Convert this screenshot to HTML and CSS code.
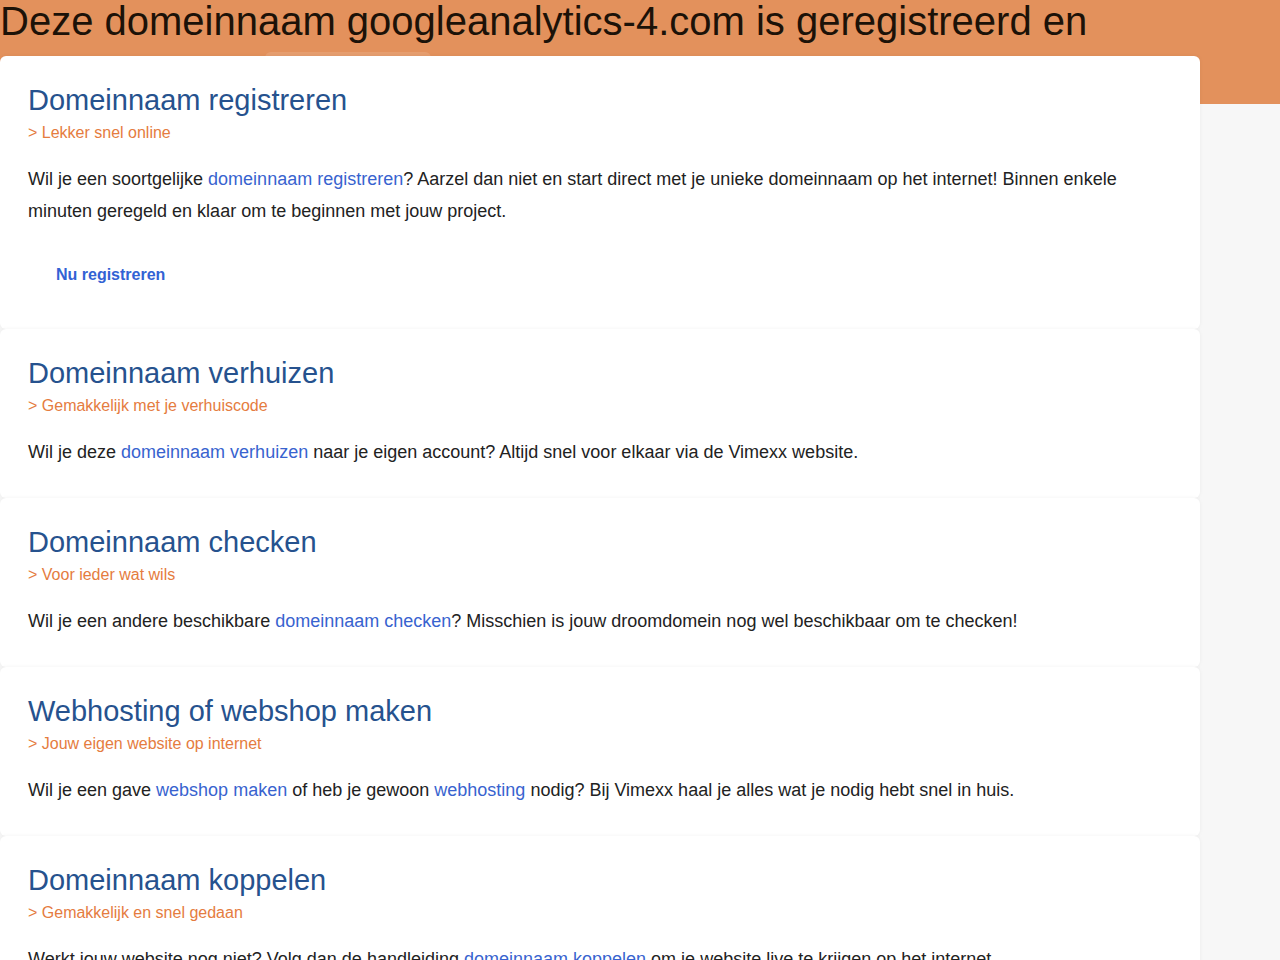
FILE: index.html
```html
<!DOCTYPE html>
<html lang="nl">
<head>
<meta charset="utf-8">
<title>googleanalytics-4.com</title>
<link rel="stylesheet" href="styles.css">
</head>
<body>
<header class="top">
  <h1 class="top-title">Deze domeinnaam googleanalytics-4.com is geregistreerd en is nog niet in gebruik</h1>
  <span class="top-ghost"></span>
</header>
<main class="cards">
  <section class="card">
    <h2 class="card-title">Domeinnaam registreren</h2>
    <p class="card-sub">&gt; Lekker snel online</p>
    <p class="card-text">Wil je een soortgelijke <a href="#">domeinnaam registreren</a>? Aarzel dan niet en start direct met je unieke domeinnaam op het internet! Binnen enkele minuten geregeld en klaar om te beginnen met jouw project.</p>
    <a class="card-btn" href="#">Nu registreren</a>
  </section>
  <section class="card">
    <h2 class="card-title">Domeinnaam verhuizen</h2>
    <p class="card-sub">&gt; Gemakkelijk met je verhuiscode</p>
    <p class="card-text">Wil je deze <a href="#">domeinnaam verhuizen</a> naar je eigen account? Altijd snel voor elkaar via de Vimexx website.</p>
  </section>
  <section class="card">
    <h2 class="card-title">Domeinnaam checken</h2>
    <p class="card-sub">&gt; Voor ieder wat wils</p>
    <p class="card-text">Wil je een andere beschikbare <a href="#">domeinnaam checken</a>? Misschien is jouw droomdomein nog wel beschikbaar om te checken!</p>
  </section>
  <section class="card">
    <h2 class="card-title">Webhosting of webshop maken</h2>
    <p class="card-sub">&gt; Jouw eigen website op internet</p>
    <p class="card-text">Wil je een gave <a href="#">webshop maken</a> of heb je gewoon <a href="#">webhosting</a> nodig? Bij Vimexx haal je alles wat je nodig hebt snel in huis.</p>
  </section>
  <section class="card">
    <h2 class="card-title">Domeinnaam koppelen</h2>
    <p class="card-sub">&gt; Gemakkelijk en snel gedaan</p>
    <p class="card-text">Werkt jouw website nog niet? Volg dan de handleiding <a href="#">domeinnaam koppelen</a> om je website live te krijgen op het internet.</p>
  </section>
</main>
</body>
</html>
```
FILE: styles.css
```css
html, body {
  margin: 0;
  padding: 0;
}
body {
  background: #f7f7f7;
  font-family: "Liberation Sans", Arial, sans-serif;
  color: #222222;
}
.top {
  position: relative;
  height: 104px;
  overflow: hidden;
  background: #e3915c;
}
.top-title {
  margin: -15px 0 0;
  width: 1100px;
  font-size: 40px;
  font-weight: normal;
  line-height: 72px;
  color: #1c1208;
}
.top-ghost {
  position: absolute;
  left: 265px;
  top: 52px;
  width: 166px;
  height: 20px;
  border-radius: 6px;
  background: rgba(255, 255, 255, 0.12);
}
.cards {
  position: relative;
  width: 1200px;
  margin-top: -48px;
}
.card {
  background: #ffffff;
  border-radius: 6px;
  box-shadow: 0 0 4px rgba(0, 0, 0, 0.05);
  padding: 27px 28px 30px;
  display: flex;
  flex-direction: column;
  align-items: flex-start;
}
.card-title {
  margin: 0;
  font-size: 29px;
  font-weight: normal;
  line-height: 34px;
  color: #26528e;
}
.card-sub {
  margin: 4px 0 0;
  font-size: 16px;
  line-height: 24px;
  color: #e57c40;
}
.card-text {
  margin: 18px 0 0;
  font-size: 18px;
  line-height: 32px;
  color: #222222;
}
.card-text a {
  color: #3863cf;
  text-decoration: none;
}
.card-btn {
  margin: 24px 0 0;
  padding: 12px 28px;
  font-size: 16px;
  line-height: 24px;
  font-weight: bold;
  color: #3262d4;
  text-decoration: none;
}
```
